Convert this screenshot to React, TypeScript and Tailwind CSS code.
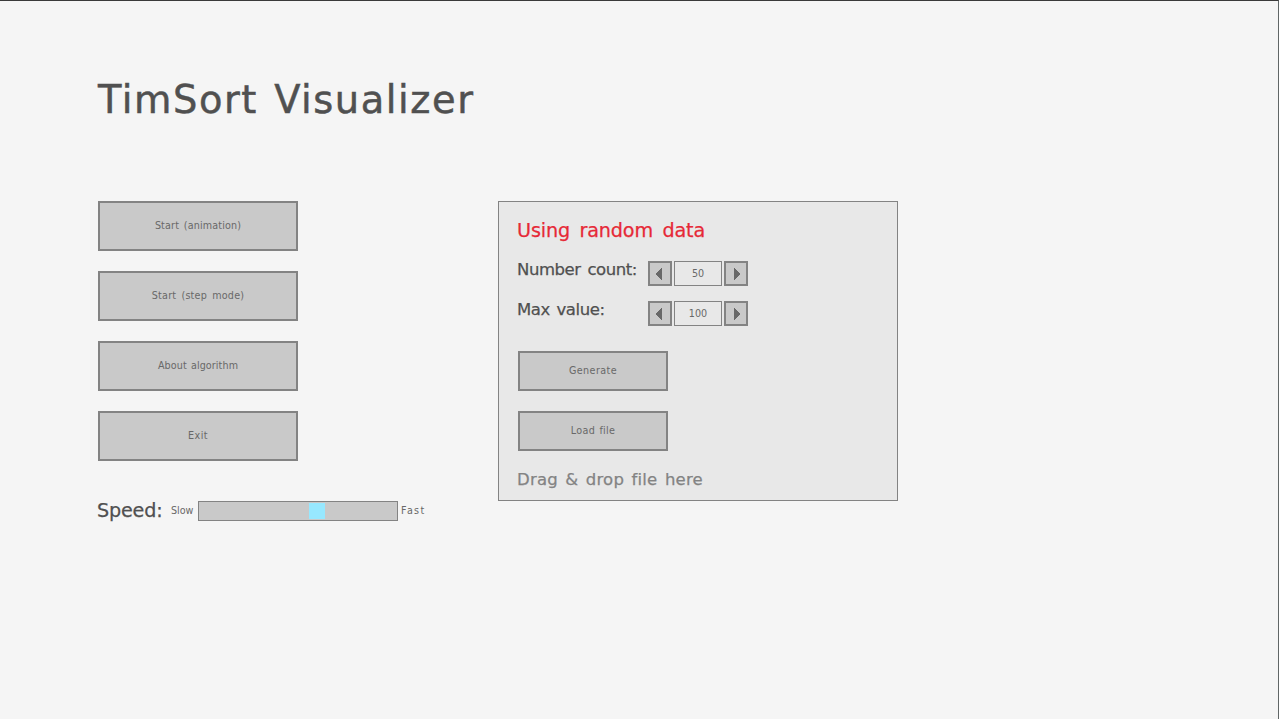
import React from 'react';

const buttonBase =
  'flex items-center justify-center border-2 border-[#838383] bg-[#c9c9c9] text-[#686868] text-[9.6px] leading-none whitespace-nowrap';

type ButtonProps = { className: string; children: React.ReactNode };

function Button({ className, children }: ButtonProps) {
  return <button className={`${buttonBase} ${className}`}>{children}</button>;
}

function Arrow({ direction }: { direction: 'left' | 'right' }) {
  return (
    <button
      aria-label={direction === 'left' ? 'Decrease' : 'Increase'}
      className="flex h-[25px] w-6 items-center justify-center border-2 border-[#838383] bg-[#c9c9c9] pt-px"
    >
      <svg width="6" height="12" viewBox="0 0 6 12" className={direction === 'left' ? 'mr-0.5 fill-[#686868]' : 'ml-0.5 fill-[#686868]'} shapeRendering="crispEdges">
        <path d={direction === 'left' ? 'M5 0H6V12H5V11H4V10H3V9H2V8H1V7H0V5H1V4H2V3H3V2H4V1H5Z' : 'M0 0H1V1H2V2H3V3H4V4H5V5H6V7H5V8H4V9H3V10H2V11H1V12H0Z'} />
      </svg>
    </button>
  );
}

function Spinner({ label, value, labelClass }: { label: string; value: string; labelClass: string }) {
  return (
    <div className="flex h-[25px]">
      <span className={`-ml-px w-[131px] text-[16.5px] leading-[17px] whitespace-nowrap text-[#505050] [-webkit-text-stroke:0.25px_#505050] ${labelClass}`}>{label}</span>
      <div className="flex gap-0.5">
        <Arrow direction="left" />
        <span className="flex h-[25px] w-12 items-center justify-center border border-[#838383] text-[9.6px] leading-none text-[#686868]">
          {value}
        </span>
        <Arrow direction="right" />
      </div>
    </div>
  );
}

export default function App() {
  return (
    <main className="h-[719px] w-[1279px] overflow-hidden border-t border-r border-t-[#3a3a3a] border-r-[#606666] bg-[#f5f5f5] pl-[98px] font-['DejaVu_Sans',sans-serif]">
      <h1 className="mt-[79px] h-10 text-[38.4px] leading-10 tracking-[1.55px] whitespace-nowrap text-[#505050] [-webkit-text-stroke:0.5px_#505050] [word-spacing:2.5px]">
        TimSort Visualizer
      </h1>
      <div className="mt-[81px] flex gap-[200px]">
        <nav className="flex w-[200px] flex-col gap-5">
          <Button className="h-[50px] tracking-[0.15px] [word-spacing:1.5px]">Start (animation)</Button>
          <Button className="h-[50px] tracking-[0.2px] [word-spacing:2px]">Start (step mode)</Button>
          <Button className="h-[50px] tracking-[0.1px] [word-spacing:1px]">About algorithm</Button>
          <Button className="h-[50px] tracking-[0.4px]">Exit</Button>
        </nav>
        <section className="h-[300px] w-[400px] border border-[#838383] bg-[#e8e8e8] pl-[19px]">
          <h2 className="-ml-px mt-[18px] h-[22px] text-[19.2px] leading-[22px] tracking-[-0.15px] whitespace-nowrap text-[#e62937] [-webkit-text-stroke:0.25px_#e62937] [word-spacing:3.5px]">
            Using random data
          </h2>
          <div className="mt-[19px] flex flex-col gap-[15px]">
            <Spinner label="Number count:" value="50" labelClass="tracking-[-0.45px] [word-spacing:2px]" />
            <Spinner label="Max value:" value="100" labelClass="tracking-[-0.45px] [word-spacing:2px]" />
          </div>
          <div className="mt-[25px] flex flex-col gap-5">
            <Button className="h-10 w-[150px] tracking-[0.4px]">Generate</Button>
            <Button className="h-10 w-[150px] tracking-[0.3px] [word-spacing:1px]">Load file</Button>
          </div>
          <p className="-ml-px mt-5 text-[16.5px] leading-[17px] tracking-[0.2px] whitespace-nowrap text-[#838383] [-webkit-text-stroke:0.25px_#838383] [word-spacing:2px]">
            Drag &amp; drop file here
          </p>
        </section>
      </div>
      <div className="-ml-px flex h-5 items-center leading-5 whitespace-nowrap">
        <span className="w-[74px] text-[19.2px] tracking-[-0.2px] text-[#505050] [-webkit-text-stroke:0.25px_#505050]">Speed:</span>
        <span className="w-[27px] text-[9.6px] text-[#686868]">Slow</span>
        <div className="h-5 w-[200px] border border-[#838383] bg-[#c9c9c9] py-px pl-[110px]">
          <div className="h-4 w-4 bg-[#97e8ff]" />
        </div>
        <span className="ml-[3px] text-[9.6px] tracking-[1.3px] text-[#686868]">Fast</span>
      </div>
    </main>
  );
}
